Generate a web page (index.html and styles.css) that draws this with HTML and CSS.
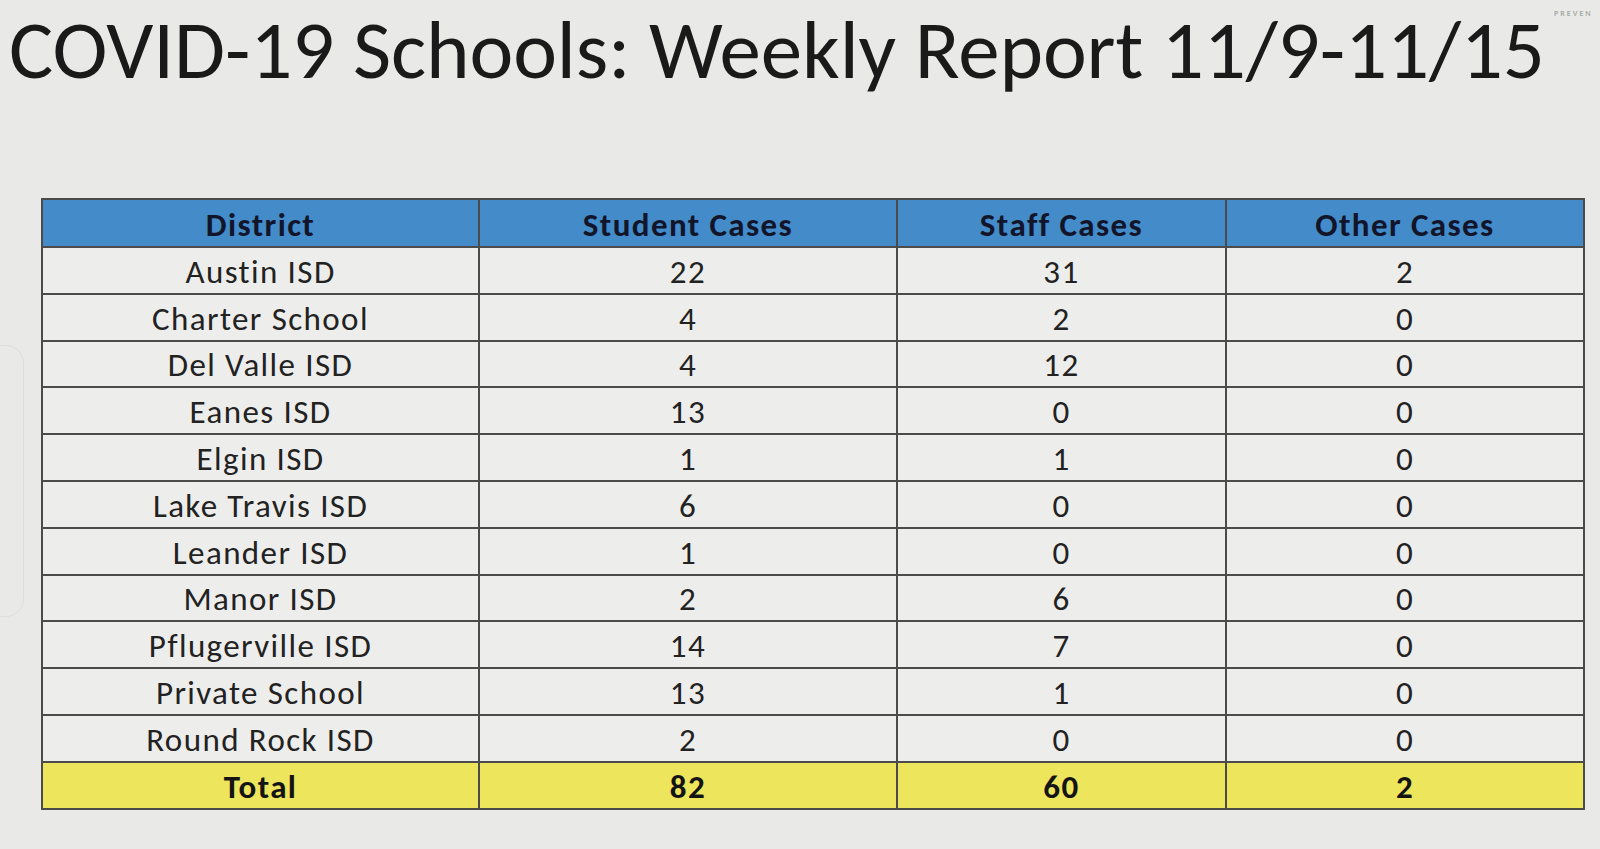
FILE: index.html
```html
<!DOCTYPE html>
<html>
<head>
<meta charset="utf-8">
<link rel="stylesheet" href="styles.css">
</head>
<body>
<div class="slide">
  <div class="top">
    <h1 class="title">COVID-19 Schools: Weekly Report 11/9-11/15</h1>
    <div class="tag">PREVEN</div>
  </div>
  <div class="side-tab"></div>
  <table class="report">
    <colgroup>
      <col class="c1"><col class="c2"><col class="c3"><col class="c4">
    </colgroup>
    <thead>
      <tr><th>District</th><th>Student Cases</th><th>Staff Cases</th><th>Other Cases</th></tr>
    </thead>
    <tbody>
      <tr><td>Austin ISD</td><td>22</td><td>31</td><td>2</td></tr>
      <tr><td>Charter School</td><td>4</td><td>2</td><td>0</td></tr>
      <tr><td>Del Valle ISD</td><td>4</td><td>12</td><td>0</td></tr>
      <tr><td>Eanes ISD</td><td>13</td><td>0</td><td>0</td></tr>
      <tr><td>Elgin ISD</td><td>1</td><td>1</td><td>0</td></tr>
      <tr><td>Lake Travis ISD</td><td>6</td><td>0</td><td>0</td></tr>
      <tr><td>Leander ISD</td><td>1</td><td>0</td><td>0</td></tr>
      <tr><td>Manor ISD</td><td>2</td><td>6</td><td>0</td></tr>
      <tr><td>Pflugerville ISD</td><td>14</td><td>7</td><td>0</td></tr>
      <tr><td>Private School</td><td>13</td><td>1</td><td>0</td></tr>
      <tr><td>Round Rock ISD</td><td>2</td><td>0</td><td>0</td></tr>
      <tr class="total"><td>Total</td><td>82</td><td>60</td><td>2</td></tr>
    </tbody>
  </table>
</div>
</body>
</html>
```
FILE: styles.css
```css
html, body {
  margin: 0;
  padding: 0;
  background: #e9eae7;
}
.slide {
  position: relative;
  width: 1600px;
  height: 849px;
  overflow: hidden;
  font-family: Carlito, Lato, "Liberation Sans", sans-serif;
  font-variant-ligatures: none;
  color: #1e1e1e;
}
.top {
  display: flex;
  align-items: flex-start;
  padding: 0 0 0 9px;
  height: 198px;
}
.title {
  flex-shrink: 0;
  margin: 0;
  font-weight: 300;
  font-size: 83px;
  line-height: 1.2;
  padding: 0;
  letter-spacing: -0.1px;
  color: #1a1a1a;
  white-space: nowrap;
}
.tag {
  margin-left: auto;
  padding-top: 8px;
  font-size: 8px;
  font-weight: 700;
  letter-spacing: 2px;
  color: #a8aaa8;
  width: 46px;
  overflow: hidden;
  white-space: nowrap;
}
.side-tab {
  position: absolute;
  left: -30px;
  top: 345px;
  width: 52px;
  height: 270px;
  border: 1px solid #dcdeda;
  border-radius: 18px;
}
.report {
  margin-left: 41px;
  width: 1542px;
  border-collapse: collapse;
  table-layout: fixed;
  font-size: 33px;
  letter-spacing: 1.4px;
  color: #222222;
}
.c1 { width: 437px; }
.c2 { width: 418px; }
.c3 { width: 329px; }
.c4 { width: 358px; }
.report th, .report td {
  border: 2px solid #4b4b4b;
  height: 46.8px;
  padding: 4px 0 0 0;
  box-sizing: border-box;
  text-align: center;
  vertical-align: middle;
  line-height: 1;
}
.report th {
  background: #438bc9;
  color: #12152a;
  font-weight: 700;
  height: 48px;
}
.report td {
  background: #ededeb;
}
.report .total td {
  background: #ede55c;
  font-weight: 700;
  color: #141414;
}
```
